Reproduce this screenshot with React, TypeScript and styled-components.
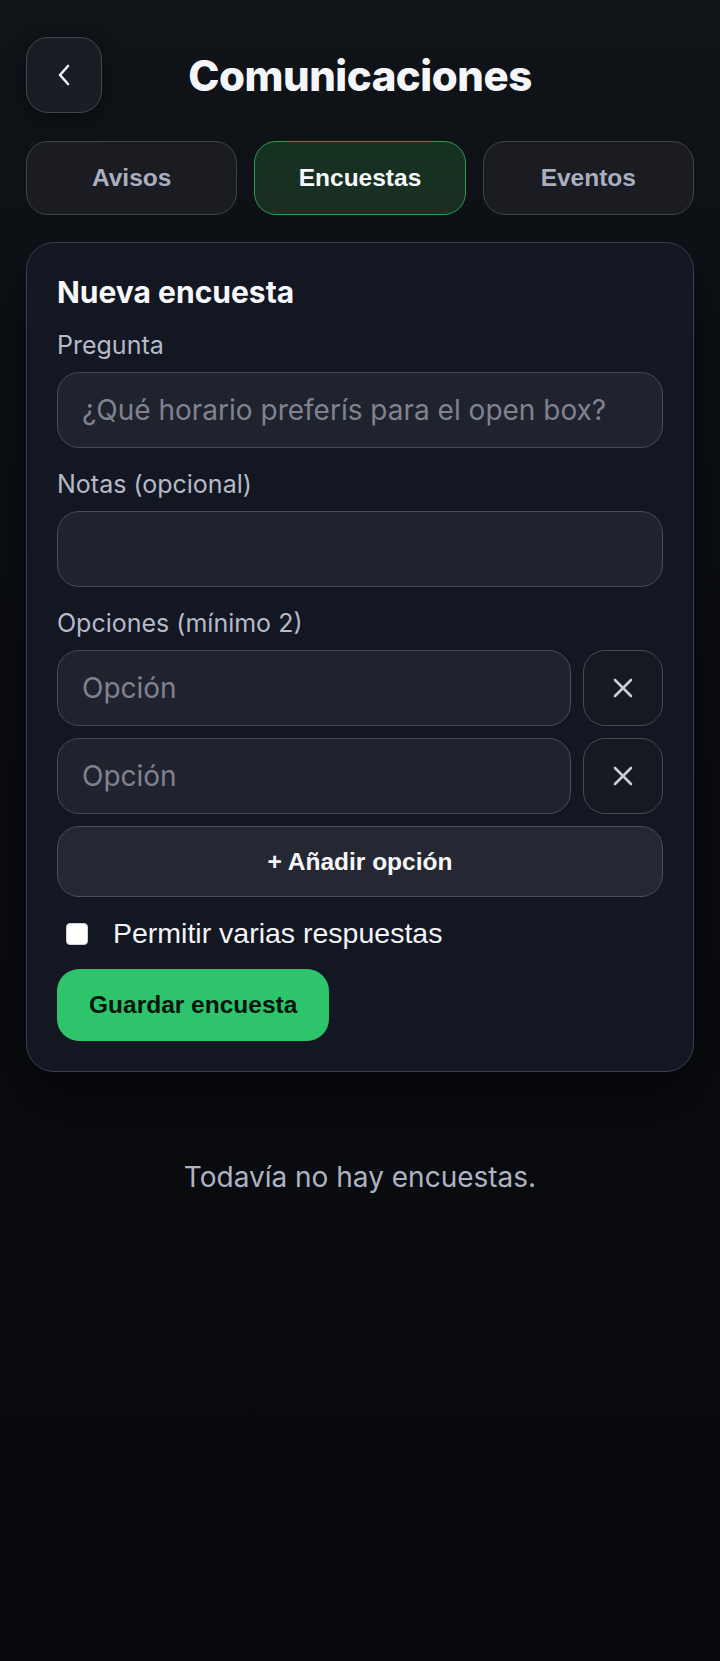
import React, { useState } from 'react';
import styled, { createGlobalStyle } from 'styled-components';

const GlobalStyle = createGlobalStyle`
  html, body {
    margin: 0;
    padding: 0;
    background: #08090d;
  }
  * {
    box-sizing: border-box;
  }
`;

const tabs = ['Avisos', 'Encuestas', 'Eventos'];

const ChevronLeft = () => (
  <svg width="14" height="22" viewBox="0 0 14 22" fill="none">
    <path d="M11 2 L3 11 L11 20" stroke="#f1f2f6" strokeWidth="2.6" strokeLinecap="round" strokeLinejoin="round" />
  </svg>
);

const CloseIcon = () => (
  <svg width="20" height="20" viewBox="0 0 20 20" fill="none">
    <path d="M2 2 L18 18 M18 2 L2 18" stroke="#c9cdd8" strokeWidth="2.6" strokeLinecap="round" />
  </svg>
);

const App = () => {
  const [active, setActive] = useState('Encuestas');
  const [options, setOptions] = useState(['', '']);
  const [multi, setMulti] = useState(false);

  return (
    <>
      <GlobalStyle />
      <Page>
        <Header>
          <BackButton aria-label="Volver">
            <ChevronLeft />
          </BackButton>
          <Title>Comunicaciones</Title>
          <span />
        </Header>

        <Tabs>
          {tabs.map((t) => (
            <Tab key={t} $active={active === t} onClick={() => setActive(t)}>
              {t}
            </Tab>
          ))}
        </Tabs>

        <Card>
          <CardTitle>Nueva encuesta</CardTitle>

          <Label $first>Pregunta</Label>
          <Input placeholder="¿Qué horario preferís para el open box?" />

          <Label>Notas (opcional)</Label>
          <Input />

          <Label>Opciones (mínimo 2)</Label>
          {options.map((o, i) => (
            <OptionRow key={i}>
              <Input
                placeholder="Opción"
                value={o}
                onChange={(e) => setOptions(options.map((v, j) => (j === i ? e.target.value : v)))}
              />
              <RemoveButton aria-label="Quitar opción">
                <CloseIcon />
              </RemoveButton>
            </OptionRow>
          ))}
          <AddButton onClick={() => setOptions([...options, ''])}>+ Añadir opción</AddButton>

          <CheckRow>
            <Checkbox type="checkbox" checked={multi} onChange={() => setMulti(!multi)} />
            Permitir varias respuestas
          </CheckRow>

          <SaveButton>Guardar encuesta</SaveButton>
        </Card>

        <Empty>Todavía no hay encuestas.</Empty>
      </Page>
    </>
  );
};

export default App;

const Page = styled.div`
  min-height: 1661px;
  padding: 37px 26px 40px;
  background: linear-gradient(180deg, #101318 0%, #0b0d12 45%, #07090c 100%);
  font-family: Inter, 'Noto Sans', sans-serif;
  color: #f3f4f8;
`;

const Header = styled.div`
  display: grid;
  grid-template-columns: 76px 1fr 76px;
  align-items: center;
`;

const BackButton = styled.button`
  width: 76px;
  height: 76px;
  border-radius: 22px;
  border: 1.5px solid #43464e;
  background: #1a1d23;
  display: flex;
  align-items: center;
  justify-content: center;
  padding: 0;
  box-shadow: 0 8px 20px rgba(0, 0, 0, 0.35);
`;

const Title = styled.h1`
  margin: 0;
  text-align: center;
  font-family: Inter, sans-serif;
  font-size: 42px;
  font-weight: 800;
  letter-spacing: -0.5px;
  color: #f5f6fa;
`;

const Tabs = styled.div`
  margin-top: 28px;
  display: grid;
  grid-template-columns: repeat(3, 1fr);
  gap: 17px;
`;

const Tab = styled.button<{ $active?: boolean }>`
  height: 74px;
  border-radius: 22px;
  border: 1.5px solid ${(p) => (p.$active ? '#2a9a52' : '#40434b')};
  background: ${(p) => (p.$active ? 'linear-gradient(180deg, #143220 0%, #1a2e22 100%)' : '#1a1c21')};
  color: ${(p) => (p.$active ? '#f7f8fb' : '#a9aec0')};
  font-family: 'Liberation Sans', Arial, sans-serif;
  font-size: 24.5px;
  font-weight: 700;
`;

const Card = styled.div`
  margin-top: 27px;
  display: flex;
  flex-direction: column;
  gap: 12px;
  padding: 31px 30px 30px;
  border-radius: 28px;
  border: 1.5px solid #3a3e48;
  background: #131722;
  box-shadow: 0 24px 60px rgba(0, 0, 0, 0.55);
`;

const CardTitle = styled.h2`
  margin: 0;
  font-size: 30px;
  line-height: 36px;
  font-weight: 700;
  color: #f7f8fb;
`;

const Label = styled.label<{ $first?: boolean }>`
  display: block;
  margin-top: ${(p) => (p.$first ? 8 : 9)}px;
  font-size: 25px;
  line-height: 30px;
  color: #b5bac8;
`;

const Input = styled.input`
  width: 100%;
  height: 76px;
  min-width: 0;
  padding: 0 24px;
  border-radius: 22px;
  border: 1.5px solid #474b56;
  background: #1f232d;
  color: #f3f4f8;
  font-family: Inter, sans-serif;
  font-size: 28px;
  outline: none;

  &::placeholder {
    color: #7f838d;
  }
`;

const OptionRow = styled.div`
  display: grid;
  grid-template-columns: 1fr 80px;
  gap: 12px;
`;

const RemoveButton = styled.button`
  height: 76px;
  border-radius: 22px;
  border: 1.5px solid #454952;
  background: #151922;
  display: flex;
  align-items: center;
  justify-content: center;
  padding: 0;
`;

const AddButton = styled.button`
  height: 71px;
  border-radius: 22px;
  border: 1.5px solid #4a4e59;
  background: #252833;
  color: #f7f8fb;
  font-family: 'Liberation Sans', Arial, sans-serif;
  font-size: 24.5px;
  font-weight: 700;
`;

const CheckRow = styled.label`
  margin-top: 7px;
  display: flex;
  align-items: center;
  gap: 25px;
  padding-left: 9px;
  font-family: 'Liberation Sans', Arial, sans-serif;
  font-size: 28.5px;
  line-height: 34px;
  color: #f3f4f8;
`;

const Checkbox = styled.input`
  appearance: none;
  margin: 0 0 -2px;
  width: 22px;
  height: 22px;
  border-radius: 4px;
  background: #ffffff;
  border: 1px solid #d0d3da;
`;

const SaveButton = styled.button`
  margin-top: 7px;
  align-self: flex-start;
  height: 72px;
  padding: 0 32px;
  border-radius: 22px;
  border: none;
  background: #2dc46c;
  color: #06140b;
  font-family: 'Liberation Sans', Arial, sans-serif;
  font-size: 24.5px;
  font-weight: 700;
`;

const Empty = styled.p`
  margin: 88px 0 0;
  text-align: center;
  font-size: 28px;
  color: #aeb3c2;
`;
